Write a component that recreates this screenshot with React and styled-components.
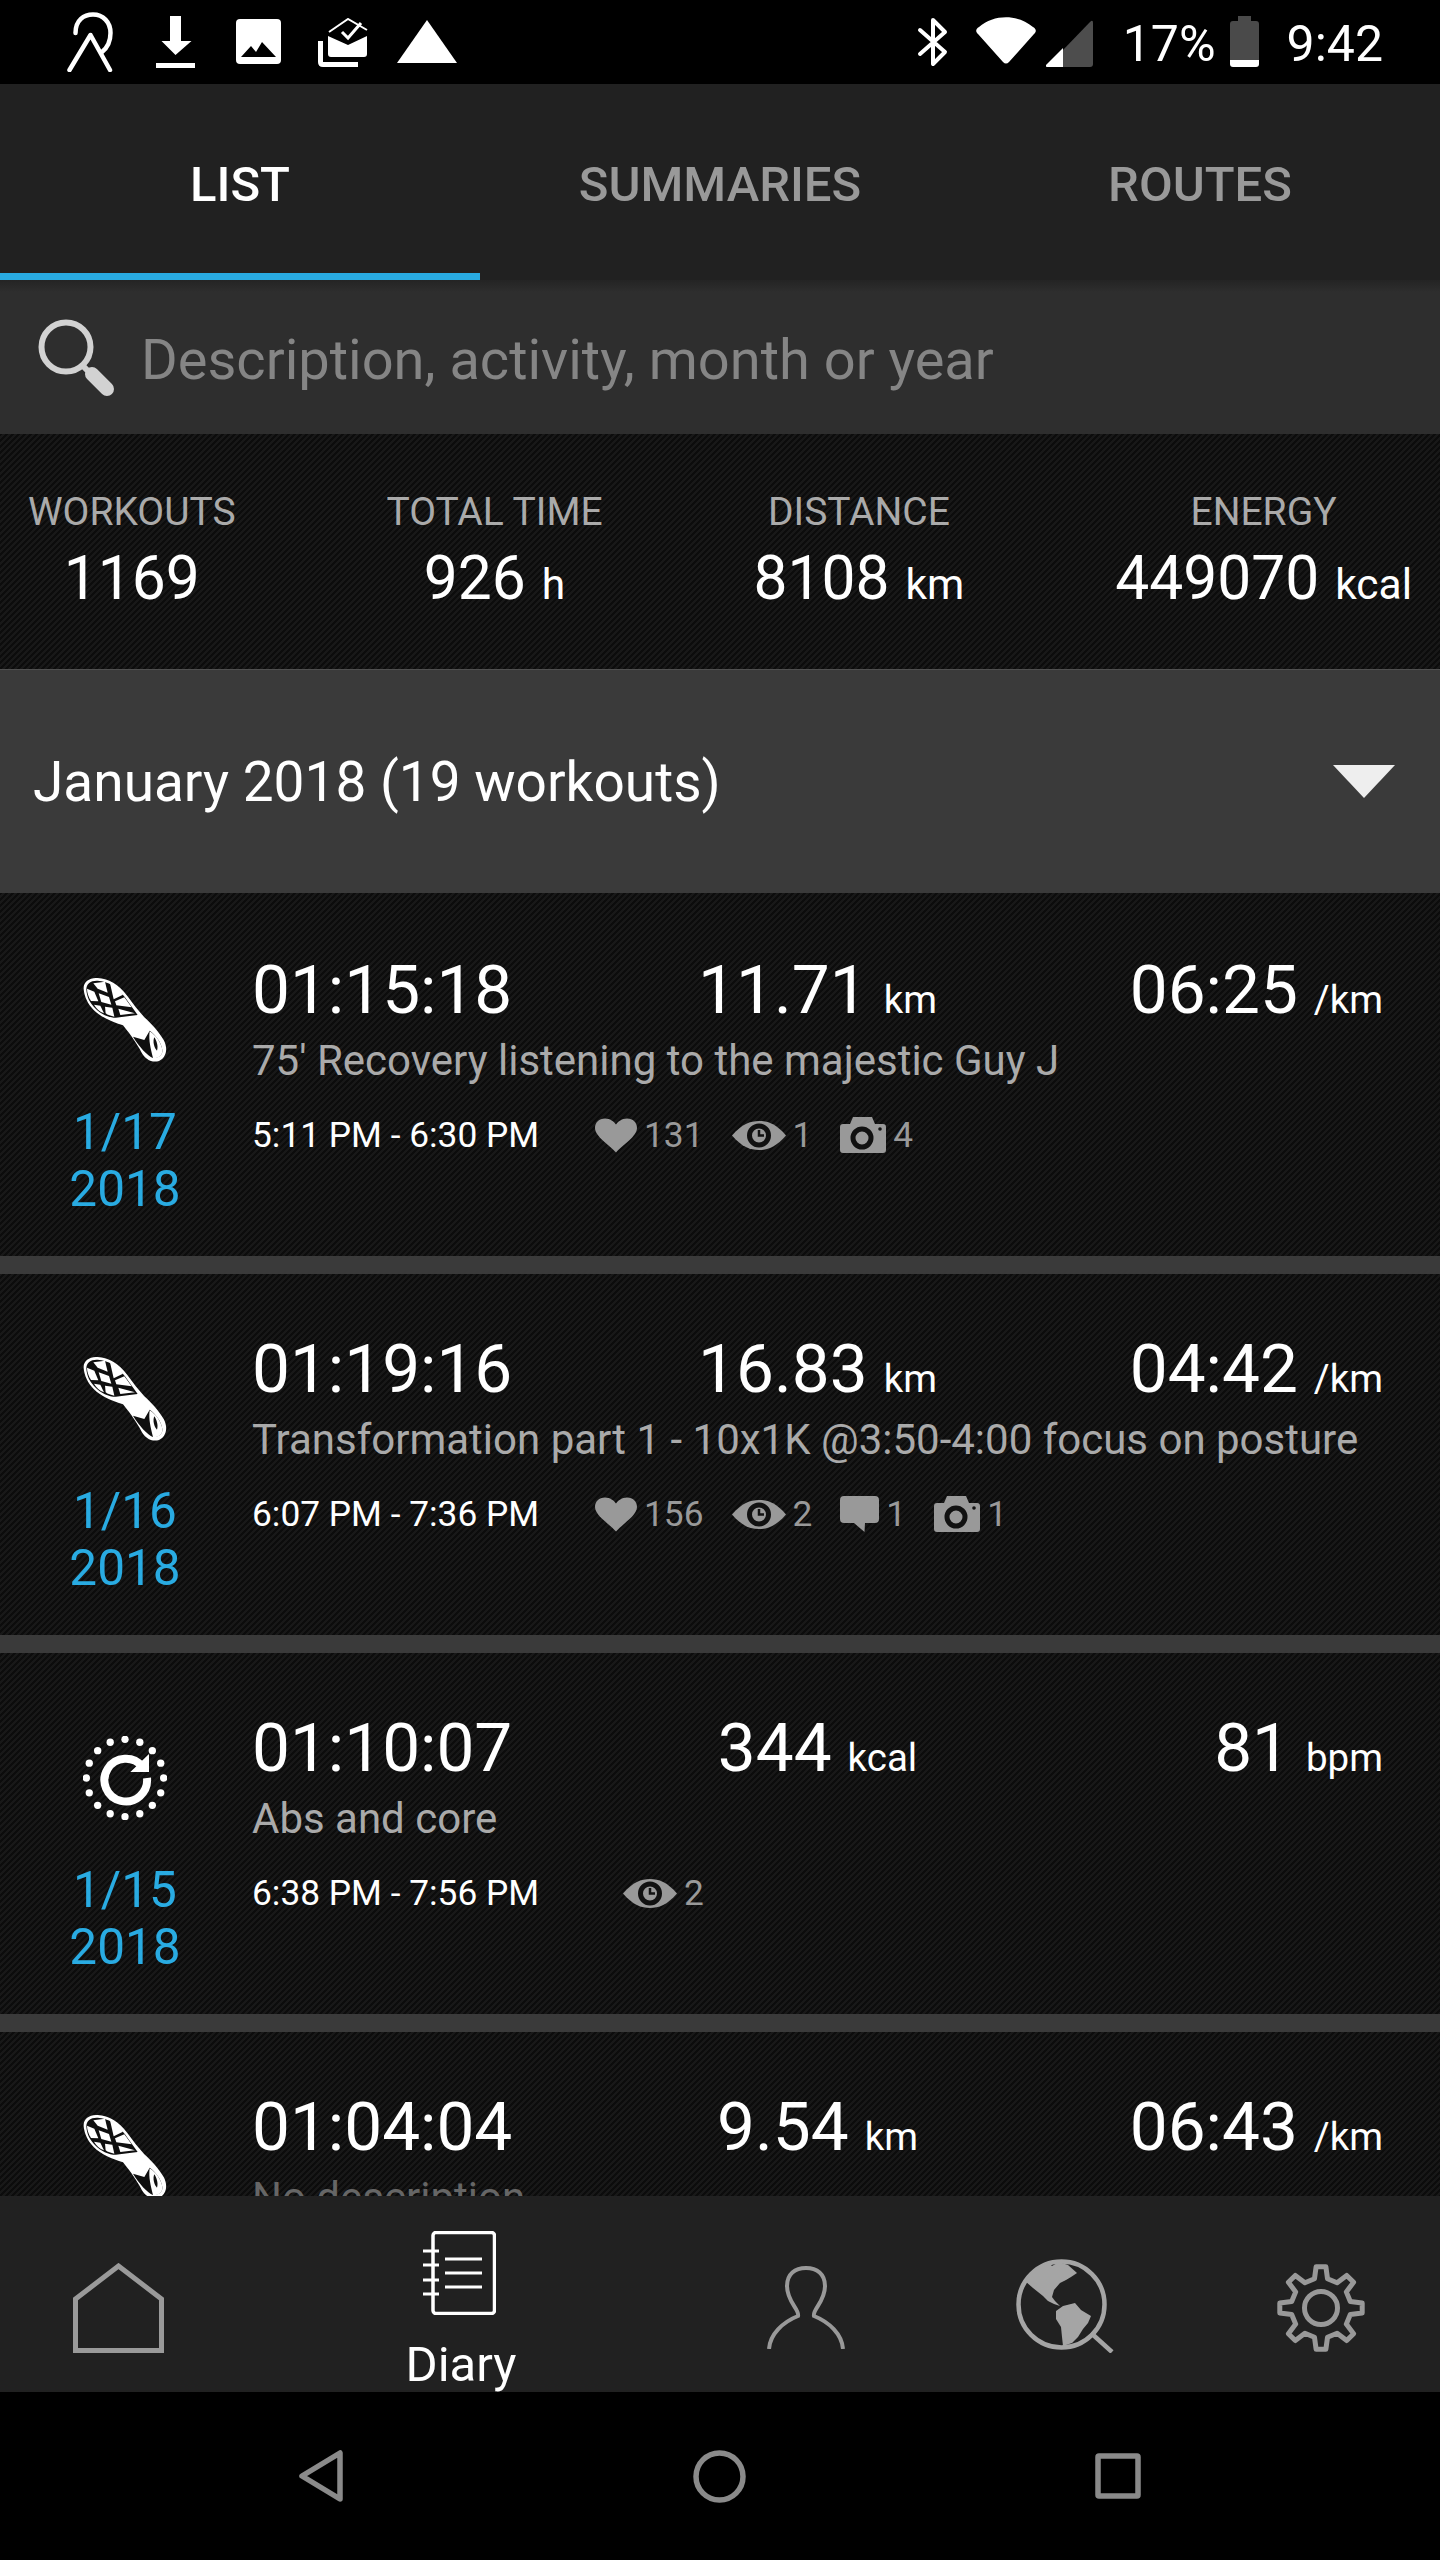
import React from "react";
import styled, { createGlobalStyle } from "styled-components";

const Global = createGlobalStyle`
  html, body { margin: 0; padding: 0; background: #000; }
  * { box-sizing: border-box; }
`;

const Screen = styled.div`
  width: 1440px; height: 2560px; display: flex; flex-direction: column; overflow: hidden;
  font-family: Roboto, "Noto Sans", sans-serif; color: #fff; background: #000;
`;
const carbon = `background-color: #0d0d0d; background-image: linear-gradient(135deg, #0c0c0c 25%, #181818 25% 50%, #0c0c0c 50% 75%, #181818 75%); background-size: 6px 6px;`;

const StatusBar = styled.header`
  height: 84px; flex: none; background: #000; display: flex; align-items: flex-start; padding: 0 57px 0 67px;
`;
const StatusIcon = styled.svg`
  display: block; flex: none; width: ${p => p.$w}px; height: ${p => p.$h}px;
  margin-left: ${p => p.$ml || 0}px; margin-top: ${p => p.$mt}px;
`;
const StatusSpacer = styled.div`flex: 1;`;
const StatusText = styled.span`
  font-size: 50px; line-height: 84px; font-weight: 400; margin-left: ${p => p.$ml}px; margin-top: 2px;
`;

const Tabs = styled.nav`
  height: 196px; flex: none; background: #212121; display: grid; grid-template-columns: repeat(3, 480px);
`;
const Tab = styled.div`
  display: flex; align-items: center; justify-content: center; padding-top: 12px;
  font-size: 49px; font-weight: 500; color: ${p => (p.$active ? "#fff" : "#999")};
  border-bottom: 7px solid ${p => (p.$active ? "#29abe2" : "transparent")};
`;

const SearchBar = styled.div`
  height: 154px; flex: none; display: flex; align-items: center; padding: 0 0 0 38px; gap: 26px;
  background: linear-gradient(#242424 0, #2e2e2e 12px);
`;
const SearchIconSvg = styled.svg`width: 77px; height: 77px; flex: none; margin-top: 0;`;
const SearchText = styled.span`font-size: 56px; color: #858585; padding-top: 5px;`;

const Totals = styled.section`
  ${carbon}
  height: 236px; flex: none; display: flex; justify-content: space-between; padding: 56px 28px 0;
  border-bottom: 1px solid #505050;
`;
const Total = styled.div`display: flex; flex-direction: column; align-items: center;`;
const TotalLabel = styled.div`font-size: 39px; line-height: 44px; color: #aaa;`;
const TotalValue = styled.div`font-size: 60.5px; line-height: 60px; margin-top: 15px; white-space: nowrap;`;
const TotalUnit = styled.span`font-size: 42.5px; line-height: 1; margin-left: 16px;`;

const MonthRow = styled.div`
  height: 223px; flex: none; background: #3a3a3a; display: flex; align-items: center; justify-content: space-between;
  padding: 0 45px 0 33px; font-size: 55px;
`;
const Caret = styled.svg`width: 62px; height: 33px; margin-top: 0;`;

const List = styled.div`
  ${carbon}
  flex: 1; min-height: 0; overflow: hidden; padding-top: 2px;
`;
const Row = styled.article`
  height: 379px; display: flex; border-bottom: 18px solid #3a3a3a;
`;
const DateCol = styled.div`
  width: 252px; flex: none; display: flex; flex-direction: column; align-items: center; padding: 83px 2px 0 0;
`;
const DateText = styled.div`
  font-size: 49.5px; line-height: 56.5px; color: #29abe2; text-align: center; margin-top: 42px;
`;
const ActivitySvg = styled.svg`width: 84px; height: 84px; display: block; flex: none;`;
const Body = styled.div`flex: 1; min-width: 0; padding: 55px 57px 0 0;`;
const Metrics = styled.div`display: grid; grid-template-columns: 1fr auto 1fr; font-size: 67.5px; line-height: 80px;`;
const Metric = styled.div`white-space: nowrap; text-align: ${p => p.$align || "left"};`;
const Unit = styled.span`font-size: 38.5px; line-height: 1; margin-left: 16px;`;
const Description = styled.div`
  font-size: 42px; line-height: 56px; margin-top: 3px; color: ${p => (p.$dim ? "#666" : "#aaa")}; white-space: nowrap;
`;
const MetaRow = styled.div`display: flex; align-items: center; height: 44px; margin-top: 24px; font-size: 35.3px;`;
const TimeRange = styled.span`width: ${p => p.$w}px; flex: none; white-space: nowrap;`;
const MetaItem = styled.span`display: flex; align-items: center; gap: 7px; margin-right: 28px; color: #999;`;
const MetaSvg = styled.svg`display: block; flex: none; width: ${p => p.$w}px; height: ${p => p.$h}px;`;

const BottomBar = styled.nav`
  height: 196px; flex: none; background: #212121; display: grid; grid-template-columns: 236px 447px 245px 274px 238px; overflow: hidden;
`;
const BottomItem = styled.div`
  display: flex; flex-direction: column; align-items: center; padding-top: ${p => p.$top}px;
`;
const BottomSvg = styled.svg`display: block; flex: none; width: ${p => p.$w}px; height: ${p => p.$h}px;`;
const BottomLabel = styled.div`font-size: 49px; line-height: 50px; margin: 25px 0 0 3px;`;

const NavBar = styled.footer`
  height: 168px; flex: none; background: #000; display: flex; justify-content: space-between; align-items: center;
  padding: 0 299px 0; 
`;
const NavSvg = styled.svg`display: block; width: ${p => p.$w}px; height: ${p => p.$h}px;`;

const Shoe = () => (
  <ActivitySvg viewBox="252 234 252 252">
    <path fill="#fff" d="M254 268 C252 245 272 233 296 234 C330 236 360 254 385 288 C402 312 420 334 436 352 C458 372 480 396 494 420 C508 446 502 472 480 483 C458 490 438 476 428 458 C414 432 398 408 372 376 C340 366 306 352 284 330 C266 312 256 290 254 268 Z" />
    <path fill="#0f0f0f" d="M262 268 C262 250 276 241 296 242 C328 244 354 260 378 292 C392 312 404 328 416 345 L362 352 C340 358 306 344 290 326 C272 310 263 290 262 268Z" />
    <g fill="#fff">
      <path d="M283 250 L318 245 L326 278 L296 266Z" />
      <path d="M333 250 C350 258 362 270 372 284 L344 298Z" />
      <path d="M264 266 L286 275 L298 304 L276 303 C268 290 264 278 264 266Z" />
      <path d="M299 280 L330 291 L337 314 L307 306Z" />
      <path d="M348 304 L376 292 L398 322 L352 316Z" />
      <path d="M285 314 L304 317 L315 340 C302 336 292 326 285 314Z" />
      <path d="M318 320 L340 323 L346 350 C336 348 326 345 320 340Z" />
      <path d="M358 326 L408 340 L364 345Z" />
    </g>
    <path fill="#0f0f0f" d="M402 410 L436 420 L452 392 C468 402 488 428 490 450 C492 466 478 474 462 474 C446 468 420 440 402 410 Z" />
    <path fill="#fff" d="M452 394 C470 404 488 430 490 450 C492 466 478 476 462 474 C456 450 448 420 452 394 Z" />
    <path fill="#0f0f0f" d="M466 412 C474 424 478 440 474 452 C466 446 460 424 466 412 Z" />
  </ActivitySvg>
);

const Workout = () => (
  <ActivitySvg viewBox="252 108 252 252">
    {Array.from({ length: 16 }, (_, i) => {
      const a = (i * Math.PI) / 8;
      return <circle key={i} cx={378 + 116 * Math.cos(a)} cy={234 + 116 * Math.sin(a)} r="11" fill="#fff" />;
    })}
    <path d="M430 200 A 64 64 0 1 0 444 234" fill="none" stroke="#fff" strokeWidth="24" />
    <path d="M450 162 V216 H394 Z" fill="#fff" />
  </ActivitySvg>
);

const Heart = () => (
  <MetaSvg $w={42} $h={35} viewBox="0 0 42 34" fill="#999">
    <path d="M21 34 C14 26 0 18 0 9.5 C0 4 4 0 10 0 C15 0 19 3 21 6 C23 3 27 0 32 0 C38 0 42 4 42 9.5 C42 18 28 26 21 34Z" />
  </MetaSvg>
);
const Eye = () => (
  <MetaSvg $w={54} $h={29} viewBox="0 0 54 29">
    <path fill="#999" d="M0 14.5 C10 3 18 0 27 0 C36 0 44 3 54 14.5 C44 26 36 29 27 29 C18 29 10 26 0 14.5Z" />
    <circle cx="27" cy="14.5" r="9.5" fill="#999" stroke="#111" strokeWidth="5" />
    <path d="M27 9 V14.5 H32" fill="none" stroke="#111" strokeWidth="2.5" />
  </MetaSvg>
);
const Comment = () => (
  <MetaSvg $w={39} $h={36} viewBox="0 0 39 36" fill="#999">
    <path d="M4 0 H35 Q39 0 39 4 V23 Q39 27 35 27 H25 L24.500 36 L14 27 H4 Q0 27 0 23 V4 Q0 0 4 0Z" />
  </MetaSvg>
);
const Camera = () => (
  <MetaSvg $w={46} $h={36} viewBox="0 0 46 36">
    <path fill="#999" d="M13 0 H32 L35 7 H43 Q46 7 46 10 V33 Q46 36 43 36 H3 Q0 36 0 33 V10 Q0 7 3 7 H10Z" />
    <circle cx="22" cy="21" r="9" fill="#999" stroke="#111" strokeWidth="5" />
    <circle cx="40" cy="12" r="1.800" fill="#111" />
  </MetaSvg>
);

const gearPath = (() => {
  const c = 44, out = 41.5, root = 30, n = 8;
  const pts = [];
  for (let i = 0; i < n; i++) {
    const a = -Math.PI / 2 + (i * 2 * Math.PI) / n;
    const s = Math.PI / n;
    const p = (ang, r) => `${(c + r * Math.cos(ang)).toFixed(1)} ${(c + r * Math.sin(ang)).toFixed(1)}`;
    pts.push(p(a - s * 0.56, root), p(a - s * 0.3, out), p(a + s * 0.3, out), p(a + s * 0.56, root));
  }
  return "M" + pts.join(" L") + "Z";
})();

const meta = {
  heart: Heart, eye: Eye, comment: Comment, camera: Camera,
};

const rows = [
  { id: 1, icon: Shoe, d: "1/17", t: "01:15:18", m: "11.71", mu: "km", r: "06:25", ru: "/km", desc: "75' Recovery listening to the majestic Guy J", range: "5:11 PM - 6:30 PM", w: 343, items: [["heart", 131], ["eye", 1], ["camera", 4]] },
  { id: 2, icon: Shoe, d: "1/16", t: "01:19:16", m: "16.83", mu: "km", r: "04:42", ru: "/km", desc: "Transformation part 1 - 10x1K @3:50-4:00 focus on posture", range: "6:07 PM - 7:36 PM", w: 343, items: [["heart", 156], ["eye", 2], ["comment", 1], ["camera", 1]] },
  { id: 3, icon: Workout, d: "1/15", t: "01:10:07", m: "344", mu: "kcal", r: "81", ru: "bpm", desc: "Abs and core", range: "6:38 PM - 7:56 PM", w: 371, items: [["eye", 2]] },
  { id: 4, icon: Shoe, t: "01:04:04", m: "9.54", mu: "km", r: "06:43", ru: "/km", desc: "No description", dim: true, range: "", w: 343, items: [] },
];

export default function App() {
  return (
    <Screen>
      <Global />
      <StatusBar>
        <StatusIcon $w={46} $h={60} $mt={12} viewBox="0 0 46 60" fill="none" stroke="#fff" strokeWidth="4.500" strokeLinecap="round" strokeLinejoin="round">
          <path d="M2.500 58 L23.500 23 L43 58" />
          <path d="M8.500 21 C8.500 8 17 2.500 26 2.500 C36 2.500 43.500 10 43.500 21 C43.500 30 40 36 35 40" />
        </StatusIcon>
        <StatusIcon $w={39} $h={52} $ml={43} $mt={16} viewBox="0 0 39 52" fill="#fff">
          <path d="M14 0 H25 V25 H35.500 L19.500 39 L5.500 25 H14Z M0 47 H39 V52 H0Z" />
        </StatusIcon>
        <StatusIcon $w={45} $h={45} $ml={41} $mt={19} viewBox="0 0 45 45">
          <rect width="45" height="45" rx="4" fill="#fff" />
          <path d="M5 38 L15 27 L20 33 L26 23 L40 38Z" fill="#000" />
        </StatusIcon>
        <StatusIcon $w={50} $h={49} $ml={37} $mt={18} viewBox="0 0 50 49">
          <path d="M2.500 23 V44 Q2.500 46.500 5 46.500 H40" fill="none" stroke="#fff" strokeWidth="5" />
          <path d="M10 18 L30 27 L49 18 V36 Q49 39 46 39 H13 Q10 39 10 36Z" fill="#fff" />
          <path d="M11 14 L30 1 L49 12" fill="none" stroke="#fff" strokeWidth="2" />
          <path d="M24 14 L30 20 L43 5" fill="none" stroke="#fff" strokeWidth="3" />
        </StatusIcon>
        <StatusIcon $w={60} $h={43} $ml={29} $mt={20} viewBox="0 0 60 43" fill="#fff">
          <path d="M30 0 L60 43 H0Z" />
        </StatusIcon>
        <StatusSpacer />
        <StatusIcon $w={31} $h={50} $mt={17} viewBox="0 0 31 50" fill="none" stroke="#fff" strokeWidth="4" strokeLinejoin="round" strokeLinecap="round">
          <path d="M3 13 L28 35 L16 47 V3 L28 15 L3 37" />
        </StatusIcon>
        <StatusIcon $w={60} $h={48} $ml={28} $mt={17} viewBox="0 0 60 48" fill="#fff">
          <path d="M27 45 L2 17 C-1 14 0 12 3 10 C18 -3 42 -3 57 10 C60 12 61 14 58 17 L33 45 Q30 48 27 45Z" />
        </StatusIcon>
        <StatusIcon $w={47} $h={47} $ml={10} $mt={20} viewBox="0 0 47 47">
          <path d="M17 30 L44 2 Q47 -1 47 3 V44 Q47 47 44 47 H17Z" fill="#4d4d4d" />
          <path d="M0 45 L17 28 V47 H2 Q-1 47 0 45Z" fill="#fff" />
        </StatusIcon>
        <StatusText $ml={30}>17%</StatusText>
        <StatusIcon $w={29} $h={51} $ml={14} $mt={16} viewBox="0 0 29 51">
          <path d="M8 0 H21 V5 H26 Q29 5 29 8 V44 H0 V8 Q0 5 3 5 H8Z" fill="#4a4a4a" />
          <path d="M0 44 H29 V48 Q29 51 26 51 H3 Q0 51 0 48Z" fill="#fff" />
        </StatusIcon>
        <StatusText $ml={28}>9:42</StatusText>
      </StatusBar>

      <Tabs>
        <Tab $active>LIST</Tab>
        <Tab>SUMMARIES</Tab>
        <Tab>ROUTES</Tab>
      </Tabs>

      <SearchBar>
        <SearchIconSvg viewBox="0 0 77 77" fill="none" stroke="#d2d2d2">
          <circle cx="28" cy="28" r="24.500" strokeWidth="6" />
          <path d="M44 46 L50 52" strokeWidth="6" />
          <path d="M54 55 L69 70" strokeWidth="14" strokeLinecap="round" />
        </SearchIconSvg>
        <SearchText>Description, activity, month or year</SearchText>
      </SearchBar>

      <Totals>
        <Total><TotalLabel>WORKOUTS</TotalLabel><TotalValue>1169</TotalValue></Total>
        <Total><TotalLabel>TOTAL TIME</TotalLabel><TotalValue>926<TotalUnit>h</TotalUnit></TotalValue></Total>
        <Total><TotalLabel>DISTANCE</TotalLabel><TotalValue>8108<TotalUnit>km</TotalUnit></TotalValue></Total>
        <Total><TotalLabel>ENERGY</TotalLabel><TotalValue>449070<TotalUnit>kcal</TotalUnit></TotalValue></Total>
      </Totals>

      <MonthRow>
        <span>January 2018 (19 workouts)</span>
        <Caret viewBox="0 0 62 33"><path d="M0 0 H62 L31 33Z" fill="#eee" /></Caret>
      </MonthRow>

      <List>
        {rows.map(r => {
          const Icon = r.icon;
          return (
            <Row key={r.id}>
              <DateCol>
                <Icon />
                {r.d && <DateText>{r.d}<br />2018</DateText>}
              </DateCol>
              <Body>
                <Metrics>
                  <Metric>{r.t}</Metric>
                  <Metric $align="center">{r.m}<Unit>{r.mu}</Unit></Metric>
                  <Metric $align="right">{r.r}<Unit>{r.ru}</Unit></Metric>
                </Metrics>
                <Description $dim={r.dim}>{r.desc}</Description>
                {r.range && (
                  <MetaRow>
                    <TimeRange $w={r.w}>{r.range}</TimeRange>
                    {r.items.map(([k, n]) => {
                      const M = meta[k];
                      return <MetaItem key={k}><M />{n}</MetaItem>;
                    })}
                  </MetaRow>
                )}
              </Body>
            </Row>
          );
        })}
      </List>

      <BottomBar>
        <BottomItem $top={67}>
          <BottomSvg $w={91} $h={90} viewBox="0 0 91 90" fill="none" stroke="#9a9a9a" strokeWidth="5">
            <path d="M45.500 3 L88.500 36 V87.500 H2.500 V36Z" />
          </BottomSvg>
        </BottomItem>
        <BottomItem $top={35}>
          <BottomSvg $w={73} $h={84} viewBox="0 0 73 84" fill="none" stroke="#fff">
            <rect x="10" y="1.500" width="61.500" height="81" rx="3" strokeWidth="3.500" />
            <path d="M0 20 H16 M0 34 H16 M0 49 H16 M0 63 H16 M22 28 H59 M22 42 H59 M22 56 H59" strokeWidth="3" />
          </BottomSvg>
          <BottomLabel>Diary</BottomLabel>
        </BottomItem>
        <BottomItem $top={70}>
          <BottomSvg $w={78} $h={83} viewBox="0 0 78 83" fill="none" stroke="#999" strokeWidth="4">
            <path d="M2 83 C3 68 16 56 31 50 C33 44 20 36 20 20 C20 8 28 2 39 2 C50 2 58 8 58 20 C58 36 45 44 47 50 C62 56 75 68 76 83" />
          </BottomSvg>
        </BottomItem>
        <BottomItem $top={63}>
          <BottomSvg $w={98} $h={94} viewBox="0 0 98 94">
            <circle cx="45.500" cy="45.500" r="43" fill="none" stroke="#a5a5a5" strokeWidth="4.500" />
            <path d="M75 74 L96 93" stroke="#a5a5a5" strokeWidth="4.500" fill="none" />
            <path fill="#a5a5a5" d="M9 22 C14 14 20 9 26 6 L33 4 L36 7 L43 3 L52 6 L61 14 L55 18 L50 21 L44 24 L38 31 L36 38 L39 42 L44 47 L38 45 L32 42 L27 37 L22 33 L17 29 Z" />
            <path fill="#a5a5a5" d="M40 52 L47 47 L59 44 L65 51 L75 57 L72 64 L67 70 L62 78 L56 84 L47 87 L46 78 L45 68 L40 60Z" />
          </BottomSvg>
        </BottomItem>
        <BottomItem $top={68}>
          <BottomSvg $w={88} $h={88} viewBox="0 0 88 88" fill="none" stroke="#999" strokeWidth="5" strokeLinejoin="round">
            <path d={gearPath} />
            <circle cx="44" cy="44" r="16.500" />
          </BottomSvg>
        </BottomItem>
      </BottomBar>

      <NavBar>
        <NavSvg $w={44} $h={52} viewBox="0 0 44 52" fill="none" stroke="#8a8a8a" strokeWidth="5.500" strokeLinejoin="round">
          <path d="M41 3 V49 L3 26Z" />
        </NavSvg>
        <NavSvg $w={53} $h={53} viewBox="0 0 53 53" fill="none" stroke="#8a8a8a" strokeWidth="5.500">
          <circle cx="26.500" cy="26.500" r="23.500" />
        </NavSvg>
        <NavSvg $w={46} $h={46} viewBox="0 0 46 46" fill="none" stroke="#8a8a8a" strokeWidth="5.500" strokeLinejoin="round">
          <rect x="3" y="3" width="40" height="40" rx="1" />
        </NavSvg>
      </NavBar>
    </Screen>
  );
}
